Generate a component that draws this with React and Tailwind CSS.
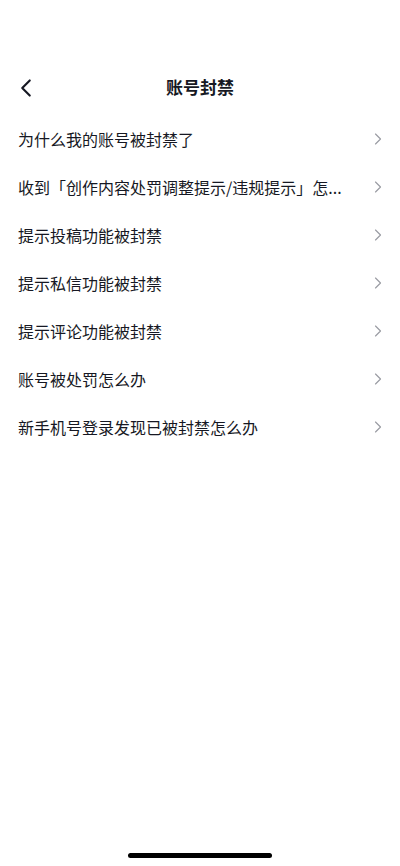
import { ChevronLeft, ChevronRight } from "lucide-react";

const items = [
  "为什么我的账号被封禁了",
  "收到「创作内容处罚调整提示/违规提示」怎...",
  "提示投稿功能被封禁",
  "提示私信功能被封禁",
  "提示评论功能被封禁",
  "账号被处罚怎么办",
  "新手机号登录发现已被封禁怎么办",
];

const App = () => {
  return (
    <div
      className="relative w-[400px] h-[866px] bg-white overflow-hidden text-[#161823]"
      style={{ fontFamily: '"Noto Sans CJK SC", "Noto Sans", sans-serif' }}
    >
      {/* header */}
      <div className="mt-[64px] h-[46px] flex items-center relative">
        <button className="absolute left-[11px] top-[9px] text-[#161823]">
          <ChevronLeft className="w-[30px] h-[30px]" strokeWidth={1.7} />
        </button>
        <h1 className="w-full text-center text-[17px] font-semibold">账号封禁</h1>
      </div>

      {/* list */}
      <div className="mt-[5px]">
        {items.map((item) => (
          <div key={item} className="h-[48px] flex items-center pl-[18px] pr-[12px]">
            <span className="flex-1 whitespace-nowrap overflow-hidden text-[16px] pr-[20px]">{item}</span>
            <ChevronRight className="w-[20px] h-[20px] text-[#9a9ca3] shrink-0" strokeWidth={1.4} />
          </div>
        ))}
      </div>

      {/* home indicator */}
      <div className="absolute bottom-[8px] left-[128px] w-[144px] h-[5px] rounded-full bg-black" />
    </div>
  );
};

export default App;
